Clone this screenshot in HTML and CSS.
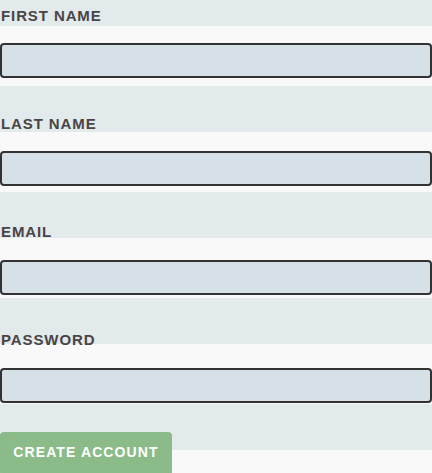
FILE: index.html
```html
<!DOCTYPE html>
<html lang="en">
<head>
<meta charset="utf-8">
<title>Create account</title>
<link rel="stylesheet" href="styles.css">
</head>
<body>
<form class="signup">
  <div class="field">
    <label class="field-label" for="first">First name</label>
    <input class="field-input" id="first" type="text">
  </div>
  <div class="field">
    <label class="field-label" for="last">Last name</label>
    <input class="field-input" id="last" type="text">
  </div>
  <div class="field">
    <label class="field-label" for="email">Email</label>
    <input class="field-input" id="email" type="email">
  </div>
  <div class="field">
    <label class="field-label" for="password">Password</label>
    <input class="field-input" id="password" type="password">
  </div>
  <button class="submit" type="button">Create account</button>
</form>
</body>
</html>
```
FILE: styles.css
```css
html {
  background-color: #f9f9f9;
  background-image: linear-gradient(#e2eaec 46.5px, #f9f9f9 46.5px);
  background-size: 100% 106px;
  background-position: 0 -20px;
  background-repeat: repeat-y;
  min-height: 100%;
}

body {
  margin: 0;
  font-family: "Liberation Sans", Arial, sans-serif;
}

.signup {
  display: flex;
  flex-direction: column;
  align-items: flex-start;
  padding-top: 6.5px;
}

.field {
  display: flex;
  flex-direction: column;
  width: 100%;
  margin-bottom: 36.8px;
}

.field:last-of-type {
  margin-bottom: 29px;
}

.field-label {
  display: block;
  font-size: 15px;
  line-height: 18px;
  font-weight: 700;
  letter-spacing: 0.9px;
  text-transform: uppercase;
  color: #4a4446;
  padding-left: 1px;
  margin-bottom: 18.5px;
}

.field-input {
  box-sizing: border-box;
  width: 100%;
  height: 35px;
  margin: 0;
  background: #d5e1e6;
  border: 2px solid #333333;
  border-radius: 4px;
  font: inherit;
}

.submit {
  box-sizing: border-box;
  width: 172px;
  height: 44px;
  margin: 0;
  padding: 0 0 3px;
  border: none;
  border-radius: 4px;
  background: #8abb88;
  color: #ffffff;
  font-family: "Liberation Sans", Arial, sans-serif;
  font-size: 14px;
  font-weight: 700;
  letter-spacing: 1.1px;
  text-transform: uppercase;
  text-align: center;
}
```
